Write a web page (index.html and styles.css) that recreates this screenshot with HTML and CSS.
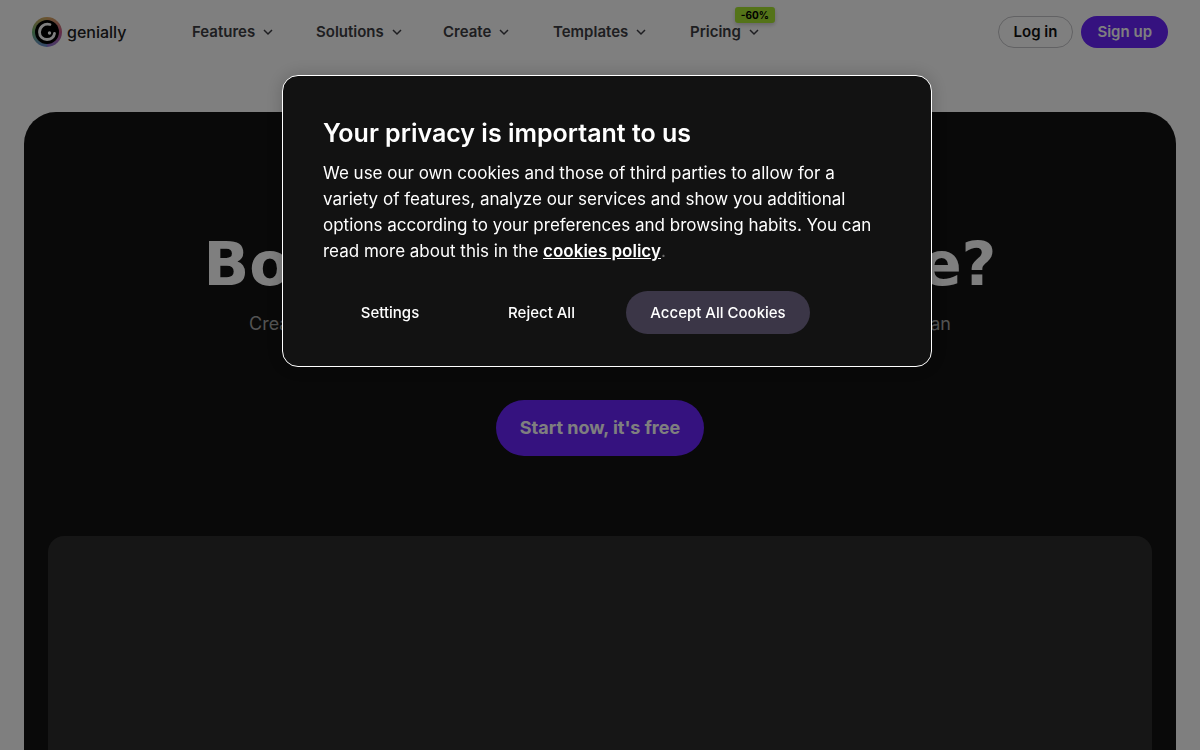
FILE: index.html
```html
<!DOCTYPE html>
<html lang="en">
<head>
<meta charset="utf-8">
<meta name="viewport" content="width=device-width, initial-scale=1">
<title>Genially</title>
<link rel="stylesheet" href="styles.css">
</head>
<body>
<header class="header">
  <a class="logo" href="#">
    <svg class="logo-mark" viewBox="0 0 30 30" aria-hidden="true">
      <defs>
        <linearGradient id="ring-left" x1="0" y1="0" x2="0" y2="1">
          <stop offset="0" stop-color="#d8a860"/>
          <stop offset=".5" stop-color="#68b070"/>
          <stop offset="1" stop-color="#6c90d8"/>
        </linearGradient>
        <linearGradient id="ring-right" x1="0" y1="0" x2="0" y2="1">
          <stop offset="0" stop-color="#d8a860"/>
          <stop offset=".5" stop-color="#c8588c"/>
          <stop offset="1" stop-color="#8c78d8"/>
        </linearGradient>
      </defs>
      <path d="M15 0a15 15 0 0 0 0 30z" fill="url(#ring-left)"/>
      <path d="M15 0a15 15 0 0 1 0 30z" fill="url(#ring-right)"/>
      <circle cx="15" cy="15" r="12" fill="#000"/>
      <path d="M18 7.500C12 6 7.500 10 7.500 15.200C7.500 19.500 11 22.500 15 22.500C19 22.500 22 20 22.500 16.500" fill="none" stroke="#fff" stroke-width="2.800" stroke-linecap="round"/>
      <circle cx="17.500" cy="16" r="1.700" fill="#fff"/>
    </svg>
    <span>genially</span>
  </a>
  <nav class="nav">
    <button class="nav-item" type="button">Features <svg class="chevron" viewBox="0 0 10 10" aria-hidden="true"><path d="M1 3l4 4 4-4"/></svg></button>
    <button class="nav-item" type="button">Solutions <svg class="chevron" viewBox="0 0 10 10" aria-hidden="true"><path d="M1 3l4 4 4-4"/></svg></button>
    <button class="nav-item" type="button">Create <svg class="chevron" viewBox="0 0 10 10" aria-hidden="true"><path d="M1 3l4 4 4-4"/></svg></button>
    <button class="nav-item" type="button">Templates <svg class="chevron" viewBox="0 0 10 10" aria-hidden="true"><path d="M1 3l4 4 4-4"/></svg></button>
    <button class="nav-item" type="button">Pricing <svg class="chevron" viewBox="0 0 10 10" aria-hidden="true"><path d="M1 3l4 4 4-4"/></svg><span class="badge">-60%</span></button>
  </nav>
  <div class="account">
    <a class="pill pill-outline" href="#">Log in</a>
    <a class="pill pill-solid" href="#">Sign up</a>
  </div>
</header>
<main class="hero">
  <h1 class="hero-title">Boring and interactive?</h1>
  <p class="hero-text">Create presentations, infographics, gamification, interactive media or more with an easy, all-in-one tool</p>
  <a class="cta" href="#">Start now, it's free</a>
  <div class="preview"></div>
</main>
<div class="overlay">
  <section class="dialog" role="dialog" aria-modal="true" aria-labelledby="privacy-title">
    <h2 class="dialog-title" id="privacy-title">Your privacy is important to us</h2>
    <p class="dialog-text">We use our own cookies and those of third parties to allow for a variety of features, analyze our services and show you additional options according to your preferences and browsing habits. You can read more about this in the <a class="policy" href="#">cookies policy</a><span class="stop">.</span></p>
    <div class="actions">
      <button class="action" type="button">Settings</button>
      <button class="action" type="button">Reject All</button>
      <button class="action action-main" type="button">Accept All Cookies</button>
    </div>
  </section>
</div>
</body>
</html>
```

FILE: styles.css
```css
* { box-sizing: border-box; }
body {
  display: flex;
  flex-direction: column;
  min-height: 100vh;
  margin: 0;
  background: #fff;
  font-family: Inter, "Liberation Sans", sans-serif;
}
a { color: inherit; text-decoration: none; }
button { border: 0; padding: 0; background: none; font: inherit; color: inherit; cursor: pointer; }

.header {
  display: flex;
  align-items: center;
  height: 64px;
  padding: 0 32px;
  color: #3c3c42;
}
.logo {
  display: flex;
  align-items: center;
  gap: 5px;
  width: 160px;
  font-size: 16px;
  line-height: 24px;
  font-weight: 500;
  color: #222;
}
.logo-mark { width: 30px; height: 30px; }
.nav {
  display: grid;
  grid-template-columns: 124px 127px 110px 137px auto;
  font-size: 15px;
  line-height: 24px;
  font-weight: 600;
}
.nav-item {
  position: relative;
  display: flex;
  align-items: center;
  gap: 8px;
}
.chevron { width: 10px; height: 10px; fill: none; stroke: currentColor; stroke-width: 1.5; }
.badge {
  position: absolute;
  top: -13px;
  right: -16px;
  padding: 0 6px;
  border-radius: 3px;
  background: #a8e632;
  box-shadow: 0 2px 4px rgba(0, 0, 0, .2);
  color: #000;
  font-size: 10px;
  line-height: 16px;
  font-weight: 700;
}
.account { display: flex; gap: 8px; margin-left: auto; }
.pill {
  padding: 0 15px;
  border: 1px solid transparent;
  border-radius: 16px;
  font-size: 15px;
  line-height: 30px;
  font-weight: 600;
}
.pill-outline { border-color: #c4c4c8; color: #111; }
.pill-solid { background: #6a24ff; color: #fff; }

.hero {
  display: flex;
  flex: 1;
  flex-direction: column;
  align-items: center;
  margin: 48px 24px 0;
  padding: 120px 24px 0;
  border-radius: 32px 32px 0 0;
  background: #121212;
  text-align: center;
}
.hero-title {
  margin: 0;
  color: #fff;
  font-family: "DejaVu Sans", sans-serif;
  font-size: 60px;
  line-height: 64px;
  font-weight: 700;
  white-space: nowrap;
}
.hero-text {
  max-width: 720px;
  margin: 16px 0 0;
  color: #a6a6a6;
  font-size: 18px;
  line-height: 24px;
}
.cta {
  margin-top: 40px;
  padding: 0 24px;
  border-radius: 28px;
  background: #6a24ff;
  color: #fff;
  font-size: 18px;
  line-height: 56px;
  font-weight: 700;
}
.preview {
  flex: 1;
  align-self: stretch;
  margin-top: 80px;
  border-radius: 16px 16px 0 0;
  background: #2c2c2c;
}

.overlay {
  position: fixed;
  inset: 0;
  display: flex;
  align-items: flex-start;
  justify-content: center;
  padding: 75px 0 0 14px;
  background: rgba(0, 0, 0, .5);
}
.dialog {
  width: 100%;
  max-width: 650px;
  padding: 40px;
  padding-bottom: 32px;
  border: 1px solid #fff;
  border-radius: 16px;
  background: #121212;
  box-shadow: 0 0 18px rgba(0, 0, 0, .2);
  color: #fff;
}
.dialog-title { margin: 0; font-size: 25px; line-height: 34px; font-weight: 600; }
.dialog-text { max-width: 556px; margin: 10px 0 0; font-size: 17px; line-height: 26px; }
.policy { font-weight: 600; text-decoration: underline; }
.stop { color: #696969; }
.actions {
  display: grid;
  grid-template-columns: 134px 137px 184px;
  gap: 16px;
  margin-top: 27px;
}
.action {
  height: 43px;
  border-radius: 22px;
  font-size: 15px;
  line-height: 20px;
  font-weight: 500;
}
.action-main { background: #3b3647; }
```
